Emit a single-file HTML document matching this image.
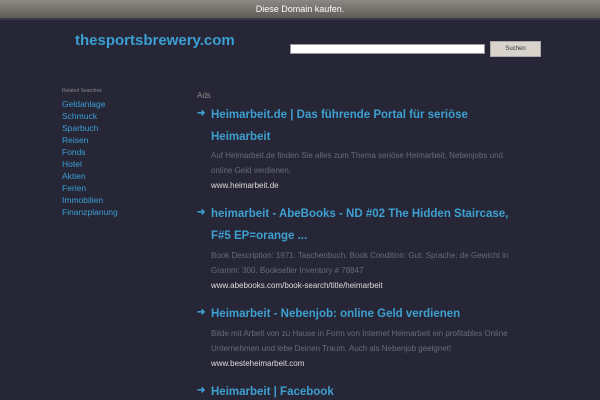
<!DOCTYPE html>
<html><head><meta charset="utf-8"><style>
*{margin:0;padding:0}
body{width:600px;height:400px;overflow:hidden;background:#262637;font-family:"Liberation Sans",Arial,sans-serif;position:relative}
.top{position:absolute;left:0;top:0;width:600px;height:18px;background:linear-gradient(#8c8883,#5f5b56);border-bottom:2px solid #3a3a48;color:#fff;font-size:9px;text-align:center;line-height:18px}
.a{position:absolute;white-space:nowrap}
.logo{left:75px;top:32px;font-size:15px;font-weight:bold;color:#3b9fd3}
.inp{position:absolute;left:290px;top:44px;width:193px;height:8px;background:#fff;border:1px solid #999}
.btn{position:absolute;left:490px;top:41px;width:49px;height:14px;background:#d8d4cc;border:1px solid #aaa;font-size:6px;line-height:14px;text-align:center;color:#333}
.rs{left:62px;top:88px;font-size:5px;color:#888}
.sl{left:62px;font-size:8.5px;color:#3a9fd3}
.ads{left:197px;top:91px;font-size:8px;color:#888}
.t{left:211px;font-size:11.5px;font-weight:bold;color:#3ea0d0;margin-top:1px}
.ar{left:197px;font-size:10px;font-weight:bold;color:#3ea0d0;margin-top:1px}
.d{left:211px;font-size:8px;color:#6a6a76}
.u{left:211px;font-size:8px;color:#ddd}
</style></head><body>
<div class="top">Diese Domain kaufen.</div>
<div class="a logo">thesportsbrewery.com</div>
<div class="inp"></div><div class="btn">Suchen</div>
<div class="a rs">Related Searches</div>
<div class="a sl" style="top:99px">Geldanlage</div>
<div class="a sl" style="top:111px">Schmuck</div>
<div class="a sl" style="top:123px">Sparbuch</div>
<div class="a sl" style="top:135px">Reisen</div>
<div class="a sl" style="top:147px">Fonds</div>
<div class="a sl" style="top:159px">Hotel</div>
<div class="a sl" style="top:171px">Aktien</div>
<div class="a sl" style="top:183px">Ferien</div>
<div class="a sl" style="top:195px">Immobilien</div>
<div class="a sl" style="top:207px">Finanzplanung</div>
<div class="a ads">Ads</div>

<div class="a ar" style="top:107px">&#10140;</div>
<div class="a t" style="top:108px">Heimarbeit.de | Das führende Portal für seriöse</div>
<div class="a t" style="top:130px">Heimarbeit</div>
<div class="a d" style="top:151px">Auf Heimarbeit.de finden Sie alles zum Thema seriöse Heimarbeit, Nebenjobs und</div>
<div class="a d" style="top:166px">online Geld verdienen.</div>
<div class="a u" style="top:181px">www.heimarbeit.de</div>

<div class="a ar" style="top:206px">&#10140;</div>
<div class="a t" style="top:207px">heimarbeit - AbeBooks - ND #02 The Hidden Staircase,</div>
<div class="a t" style="top:229px">F#5 EP=orange ...</div>
<div class="a d" style="top:251px">Book Description: 1971. Taschenbuch. Book Condition: Gut. Sprache: de Gewicht in</div>
<div class="a d" style="top:266px">Gramm: 300. Bookseller Inventory # 78847</div>
<div class="a u" style="top:281px">www.abebooks.com/book-search/title/heimarbeit</div>

<div class="a ar" style="top:306px">&#10140;</div>
<div class="a t" style="top:307px">Heimarbeit - Nebenjob: online Geld verdienen</div>
<div class="a d" style="top:329px">Bilde mit Arbeit von zu Hause in Form von Internet Heimarbeit ein profitables Online</div>
<div class="a d" style="top:344px">Unternehmen und lebe Deinen Traum. Auch als Nebenjob geeignet!</div>
<div class="a u" style="top:359px">www.besteheimarbeit.com</div>

<div class="a ar" style="top:384px">&#10140;</div>
<div class="a t" style="top:385px">Heimarbeit | Facebook</div>
</body></html>
